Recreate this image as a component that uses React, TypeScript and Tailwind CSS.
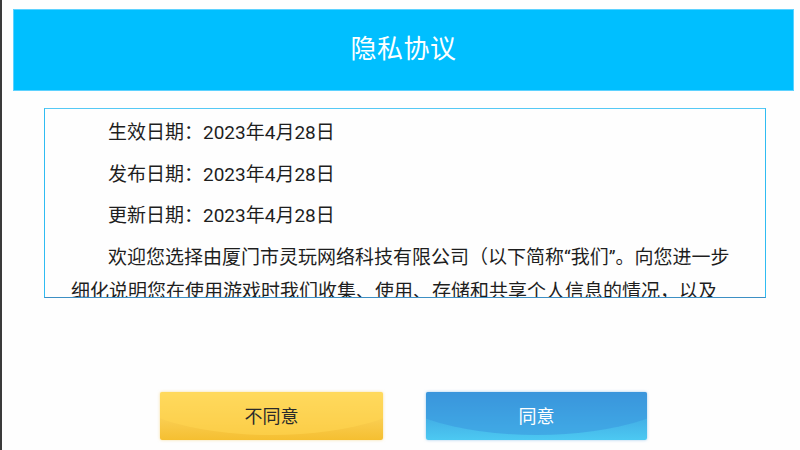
export default function App() {
  return (
    <div className="w-[800px] h-[450px] bg-[#fefefe] border-l-2 border-[#3a3a3a] overflow-hidden font-['Roboto','Noto_Sans_CJK_SC',sans-serif]">
      {/* 标题栏 */}
      <div className="mt-[9px] ml-[11px] w-[781px] h-[82px] bg-[#00bfff] border border-[#5cd2ff] flex items-center justify-center">
        <h1 className="text-[26px] text-white tracking-[0.5px] pb-[1px]">隐私协议</h1>
      </div>

      {/* 协议内容 */}
      <div className="mt-[17px] ml-[42px] w-[722px] h-[190px] border border-[#2fbcf2] border-b-[#3d8fc4] border-t-[#55c9f5] overflow-hidden">
        <div className="pl-[26px] pt-[7px] w-[690px] text-[19px] leading-[34px] text-[#1e1e1e]">
          <div className="w-[662px] space-y-[7.5px] indent-[37px]">
            <p>生效日期：2023年4月28日</p>
            <p>发布日期：2023年4月28日</p>
            <p>更新日期：2023年4月28日</p>
            <p>
              欢迎您选择由厦门市灵玩网络科技有限公司（以下简称“我们”。向您进一步细化说明您在使用游戏时我们收集、使用、存储和共享个人信息的情况，以及您所享有的相关权利等事宜。
            </p>
          </div>
        </div>
      </div>

      {/* 按钮 */}
      <div className="mt-[94px] flex">
        <button className="relative ml-[158px] w-[223px] h-[48px] rounded-[2px] overflow-hidden bg-gradient-to-b from-[#ffe070] to-[#f5bf30] shadow-[0_0_3px_rgba(240,190,60,0.5)] text-[18px] text-[#2a2a2a]">
          <div className="absolute -left-[40px] -top-[60px] w-[303px] h-[103px] rounded-[50%] bg-[#ffd550]/60" />
          <span className="relative">不同意</span>
        </button>
        <button className="relative ml-[43px] w-[221px] h-[48px] rounded-[2px] overflow-hidden bg-gradient-to-b from-[#3a8fd6] to-[#4cc9f2] shadow-[0_0_3px_rgba(60,150,220,0.5)] text-[18px] text-white">
          <div className="absolute -left-[40px] -top-[60px] w-[301px] h-[103px] rounded-[50%] bg-[#3a9ae0]/60" />
          <span className="relative">同意</span>
        </button>
      </div>
    </div>
  );
}
